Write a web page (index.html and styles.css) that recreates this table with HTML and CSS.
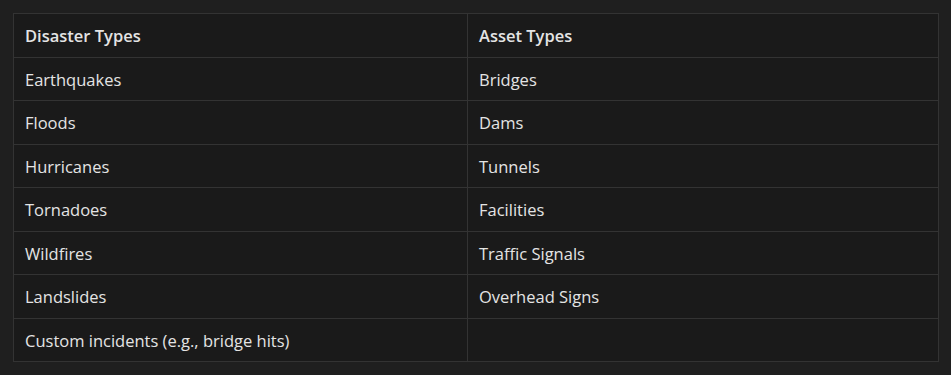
FILE: index.html
```html
<!DOCTYPE html>
<html>
<head>
<meta charset="utf-8">
<link rel="stylesheet" href="styles.css">
</head>
<body>
<div class="wrap">
<table class="grid">
  <thead>
    <tr><th class="c1">Disaster Types</th><th>Asset Types</th></tr>
  </thead>
  <tbody>
    <tr><td>Earthquakes</td><td>Bridges</td></tr>
    <tr><td>Floods</td><td>Dams</td></tr>
    <tr><td>Hurricanes</td><td>Tunnels</td></tr>
    <tr><td>Tornadoes</td><td>Facilities</td></tr>
    <tr><td>Wildfires</td><td>Traffic Signals</td></tr>
    <tr><td>Landslides</td><td>Overhead Signs</td></tr>
    <tr><td>Custom incidents (e.g., bridge hits)</td><td></td></tr>
  </tbody>
</table>
</div>
</body>
</html>
```
FILE: styles.css
```css
html, body {
  margin: 0;
  padding: 0;
  background: #1f1f1f;
}
.wrap {
  padding: 13px 0 0 13px;
}
.grid {
  border-collapse: collapse;
  width: 926px;
  background: #1a1a1a;
  font-family: "Open Sans", "Noto Sans", sans-serif;
  font-size: 16.5px;
  color: #e4e4e4;
  table-layout: fixed;
}
.grid th, .grid td {
  border: 1px solid #333333;
  text-align: left;
  padding: 10px 11px 8.5px 11px;
  line-height: 24px;
  height: 24px;
}
.grid th {
  font-weight: 600;
}
.grid .c1 {
  width: 431px;
}
```
